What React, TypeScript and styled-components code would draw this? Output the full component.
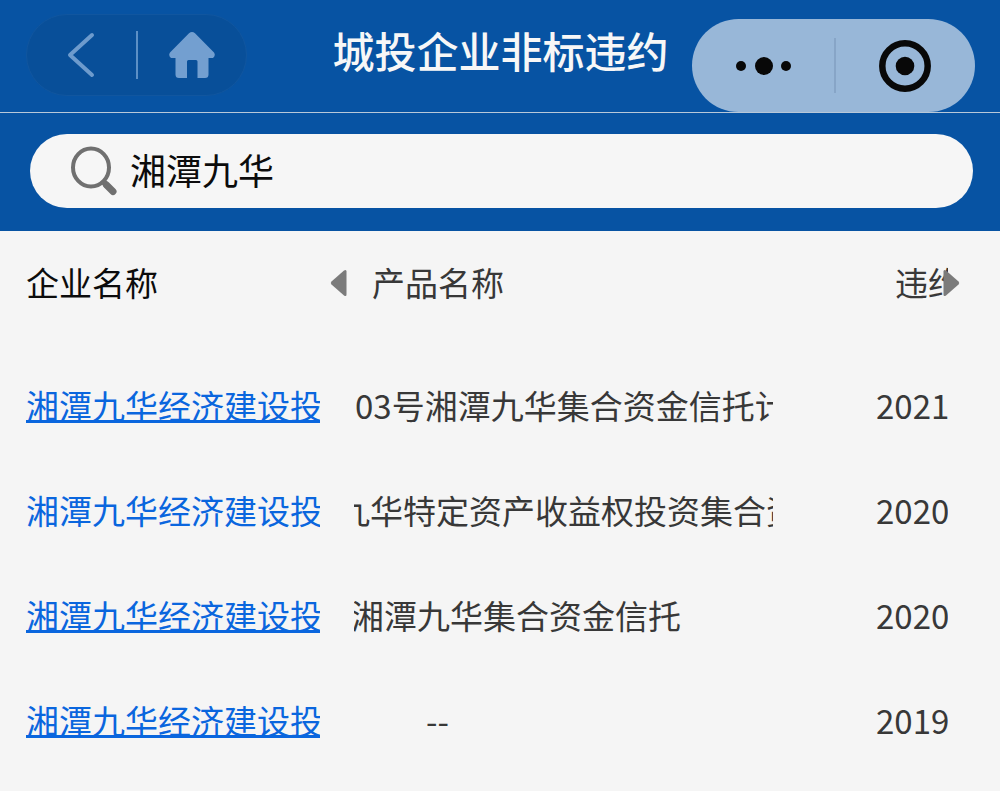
import React, { useState } from "react";
import styled, { createGlobalStyle } from "styled-components";

const GlobalStyle = createGlobalStyle`
  *, *::before, *::after { box-sizing: border-box; }
  body {
    margin: 0;
    background: #f5f5f5;
    color: #383838;
    font-family: "Noto Sans CJK SC", sans-serif;
  }
  button, input { font: inherit; color: inherit; }
`;

const Page = styled.main`
  width: 100%;
`;

const TitleBar = styled.header`
  display: grid;
  grid-template-columns: 1fr auto 1fr;
  align-items: start;
  padding: 0 25px 0 26px;
  background: #0753a3;
  border-bottom: 1px solid #b8c8d9;
`;

const Title = styled.h1`
  margin: 20px 0 0;
  color: #f7f7f7;
  font-size: 42px;
  line-height: 60px;
  font-weight: 500;
  white-space: nowrap;
`;

const NavCapsule = styled.nav`
  display: flex;
  align-items: center;
  justify-self: start;
  width: 221px;
  height: 82px;
  margin-top: 14px;
  border: 1px solid #11569f;
  border-radius: 41px;
  background: #084f99;
`;

const ActionCapsule = styled.div`
  display: flex;
  align-items: center;
  justify-self: end;
  width: 283px;
  height: 93px;
  margin-top: 19px;
  padding-left: 2px;
  border-radius: 47px;
  background: #98b7d8;
`;

const IconButton = styled.button`
  display: flex;
  flex: 1;
  align-items: center;
  justify-content: center;
  height: 100%;
  padding: 0;
  border: 0;
  background: none;
  cursor: pointer;
`;

const Divider = styled.span<{ $height: number; $color: string }>`
  width: 2px;
  height: ${(p) => p.$height}px;
  background: ${(p) => p.$color};
`;

const SearchArea = styled.form`
  padding: 21px 27px 23px 30px;
  background: #0753a3;
`;

const SearchBox = styled.label`
  display: flex;
  align-items: center;
  gap: 12px;
  height: 74px;
  padding: 0 40px;
  border-radius: 37px;
  background: #f6f6f6;
`;

const SearchInput = styled.input`
  flex: 1;
  min-width: 0;
  height: 56px;
  padding: 0 0 4px;
  border: 0;
  outline: 0;
  background: none;
  color: #0c0c0c;
  font-size: 36px;
`;

const TableArea = styled.section`
  position: relative;
`;

const Table = styled.table`
  display: block;
  width: 100%;
  font-size: 33px;
  line-height: 48px;
`;

const TableHead = styled.thead`
  display: block;
  padding-bottom: 18px;
`;

const TableBody = styled.tbody`
  display: block;
`;

const Row = styled.tr`
  display: grid;
  grid-template-columns: minmax(0, 294fr) minmax(0, 419fr) minmax(0, 141fr);
  column-gap: 34px;
  align-items: center;
  height: 105px;
  padding: 0 52px 4px 26px;
`;

const HeadCell = styled.th<{ $strong?: boolean; $indent?: number }>`
  overflow: hidden;
  padding: 0 0 0 ${(p) => p.$indent ?? 0}px;
  color: ${(p) => (p.$strong ? "#0c0c0c" : "#383838")};
  font-weight: 400;
  text-align: left;
  white-space: nowrap;
`;

const Cell = styled.td<{ $indent?: number }>`
  overflow: hidden;
  padding: 0;
  text-indent: ${(p) => p.$indent ?? 0}px;
  white-space: nowrap;
`;

const CompanyLink = styled.a<{ $underlined: boolean }>`
  color: #0a66de;
  text-decoration: ${(p) => (p.$underlined ? "underline" : "none")};
  text-decoration-thickness: 3px;
  text-decoration-skip-ink: none;
  text-underline-offset: 1px;
`;

const ScrollButton = styled.button<{ $side: "left" | "right" }>`
  position: absolute;
  top: 38px;
  ${(p) => (p.$side === "left" ? "left: 33%;" : "right: 40px;")}
  display: flex;
  padding: 0;
  border: 0;
  background: none;
  cursor: pointer;
`;

const BackIcon = () => (
  <svg width="30" height="46" viewBox="0 0 30 46" fill="none" aria-hidden="true">
    <path d="M26 3 4 23l22 20" stroke="#6d9bcd" strokeWidth="4" strokeLinecap="round" strokeLinejoin="round" />
  </svg>
);

const HomeIcon = () => (
  <svg width="46" height="46" viewBox="0 0 46 46" aria-hidden="true">
    <path
      fill="#739fd0"
      d="M20 1.3Q23-1.2 26 1.3L45 20.5Q47 23.5 44 26H39.500V42.500Q39.500 46 36 46H28.500V29.500Q28.500 28 27 28H19.500Q18 28 18 29.500V46H10Q6.500 46 6.500 42.500V26H2Q-1 23.500 1 20.500Z"
    />
  </svg>
);

const MoreIcon = () => (
  <svg width="58" height="20" viewBox="0 0 58 20" fill="#080808" aria-hidden="true">
    <circle cx="6" cy="10" r="5" />
    <circle cx="29" cy="10" r="9" />
    <circle cx="51" cy="10" r="5" />
  </svg>
);

const CloseIcon = () => (
  <svg width="54" height="54" viewBox="0 0 54 54" fill="none" aria-hidden="true">
    <circle cx="27" cy="27" r="22.700" stroke="#080808" strokeWidth="6.500" />
    <circle cx="27" cy="27" r="9.300" fill="#080808" />
  </svg>
);

const SearchIcon = () => (
  <svg width="48" height="50" viewBox="0 0 48 50" fill="none" stroke="#707070" aria-hidden="true">
    <ellipse cx="21" cy="21.500" rx="18" ry="19" strokeWidth="4" />
    <path d="m33 35 4 5" strokeWidth="6" />
    <path d="m36.500 39 6.500 6.500" strokeWidth="7" strokeLinecap="round" />
  </svg>
);

const ArrowIcon = ({ side }: { side: "left" | "right" }) => (
  <svg width="17" height="28" viewBox="0 0 17 28" fill="#7b7b7b" aria-hidden="true">
    {side === "left" ? (
      <path d="M14 1.500Q16.500 0 16.500 2.500V25.500Q16.500 28 14 26.500L1.500 15.500Q0 14 1.500 12.500Z" />
    ) : (
      <path d="M3 1.500Q.500 0 .500 2.500V25.500Q.500 28 3 26.500L15.500 15.500Q17 14 15.500 12.500Z" />
    )}
  </svg>
);

interface Default {
  company: string;
  product: string;
  offset: number;
  year: string;
  underlined: boolean;
}

const defaults: Default[] = [
  { company: "湘潭九华经济建设投", product: "03号湘潭九华集合资金信托计", offset: 1, year: "2021", underlined: true },
  { company: "湘潭九华经济建设投", product: "九华特定资产收益权投资集合资", offset: -17, year: "2020", underlined: false },
  { company: "湘潭九华经济建设投", product: "湘潭九华集合资金信托", offset: -3, year: "2020", underlined: true },
  { company: "湘潭九华经济建设投", product: "--", offset: 72, year: "2019", underlined: true },
];

export default function App() {
  const [query, setQuery] = useState("湘潭九华");

  return (
    <Page>
      <GlobalStyle />
      <TitleBar>
        <NavCapsule>
          <IconButton type="button" aria-label="返回">
            <BackIcon />
          </IconButton>
          <Divider $height={48} $color="#5c90c6" />
          <IconButton type="button" aria-label="首页">
            <HomeIcon />
          </IconButton>
        </NavCapsule>
        <Title>城投企业非标违约</Title>
        <ActionCapsule>
          <IconButton type="button" aria-label="更多">
            <MoreIcon />
          </IconButton>
          <Divider $height={55} $color="#87a5c7" />
          <IconButton type="button" aria-label="关闭">
            <CloseIcon />
          </IconButton>
        </ActionCapsule>
      </TitleBar>

      <SearchArea role="search" onSubmit={(e) => e.preventDefault()}>
        <SearchBox>
          <SearchIcon />
          <SearchInput aria-label="搜索企业" value={query} onChange={(e) => setQuery(e.target.value)} />
        </SearchBox>
      </SearchArea>

      <TableArea>
        <Table>
          <TableHead>
            <Row>
              <HeadCell scope="col" $strong>企业名称</HeadCell>
              <HeadCell scope="col" $indent={18}>产品名称</HeadCell>
              <HeadCell scope="col" $indent={88}>违约</HeadCell>
            </Row>
          </TableHead>
          <TableBody>
            {defaults.map((item, index) => (
              <Row key={index}>
                <Cell>
                  <CompanyLink href="#" $underlined={item.underlined}>{item.company}</CompanyLink>
                </Cell>
                <Cell $indent={item.offset}>{item.product}</Cell>
                <Cell $indent={69}>{item.year}</Cell>
              </Row>
            ))}
          </TableBody>
        </Table>
        <ScrollButton type="button" $side="left" aria-label="向左滚动">
          <ArrowIcon side="left" />
        </ScrollButton>
        <ScrollButton type="button" $side="right" aria-label="向右滚动">
          <ArrowIcon side="right" />
        </ScrollButton>
      </TableArea>
    </Page>
  );
}
